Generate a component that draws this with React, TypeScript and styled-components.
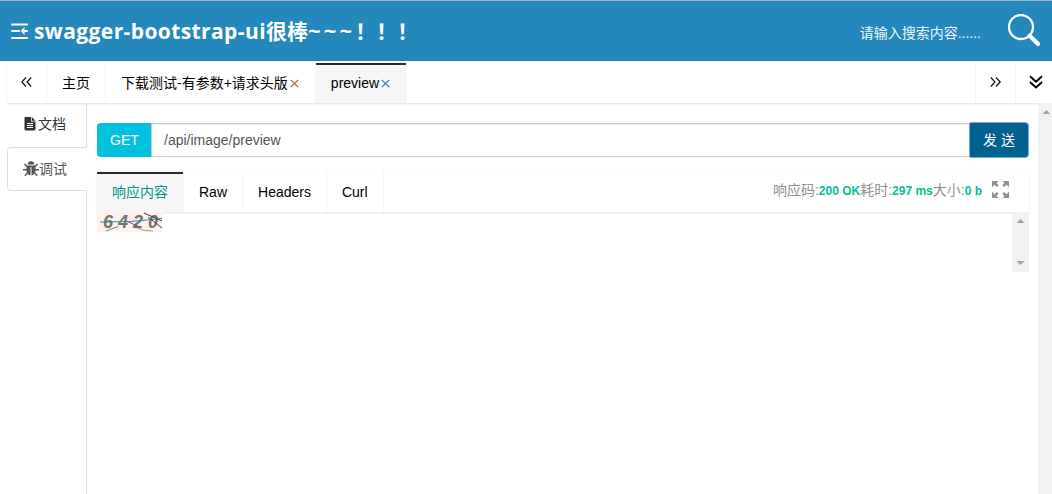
import React from "react";
import styled, { createGlobalStyle, css } from "styled-components";

const Global = createGlobalStyle`
  *, *::before, *::after { box-sizing: border-box; }
  html, body { margin: 0; height: 100%; overflow: hidden; }
  body {
    background: #fff;
    color: #000;
    font: 14px/20px "Liberation Sans", "Noto Sans CJK SC", sans-serif;
    white-space: nowrap;
  }
  svg { display: block; flex: none; }
`;

const Page = styled.div`
  display: flex;
  flex-direction: column;
  height: 494px;
  width: 1052px;
  overflow: hidden;
`;

const Header = styled.header`
  display: flex;
  align-items: center;
  height: 61px;
  flex: none;
  padding: 0 11px;
  border-top: 1px solid #a9b0b4;
  background: #2588bc;
  color: #fff;
`;

const Title = styled.h1`
  margin: 0 0 2px 6px;
  flex: 1;
  font: bold 21px/30px "Open Sans", "Noto Sans CJK SC", sans-serif;
`;

const Latin = styled.span`
  letter-spacing: 0.4px;
`;

const Tildes = styled.span`
  font-size: 22px;
  letter-spacing: 3.2px;
`;

const SearchHint = styled.span`
  margin: 3px 26px 0 0;
  color: #eef6fa;
  font-size: 14px;
`;

const TabBar = styled.nav<{ $inset?: boolean }>`
  display: flex;
  flex: none;
  height: ${(p) => (p.$inset ? 40 : 42)}px;
  padding-top: ${(p) => (p.$inset ? 0 : 2)}px;
  margin: ${(p) => (p.$inset ? "0" : "0 -3px 0 7px")};
  background: #fff;
  box-shadow: 0 1px 2px rgba(0, 0, 0, 0.12);
`;

const Tab = styled.div<{ $active?: boolean; $accent?: boolean }>`
  display: flex;
  align-items: center;
  padding: 0 15px;
  border-right: 1px solid #f4f4f4;
  color: ${(p) => (p.$accent ? "#009688" : "#000")};
  ${(p) =>
    p.$active &&
    css`
      background: #f6f6f6;
      box-shadow: inset 0 2px #292b34;
    `}
`;

const TabButton = styled.div<{ $left?: boolean }>`
  display: flex;
  flex: none;
  justify-content: center;
  align-items: center;
  width: 40px;
  padding-bottom: 3px;
  border: 0 solid #f4f4f4;
  border-width: ${(p) => (p.$left ? "0 0 0 1px" : "0 1px 0 0")};
`;

const CloseMark = styled.svg<{ $color: string }>`
  margin: 0 1px 0 2px;
  stroke: ${(p) => p.$color};
`;

const Spacer = styled.div`
  flex: 1;
`;

const Body = styled.div`
  display: flex;
  flex: 1;
  min-height: 0;
`;

const Sidebar = styled.aside`
  display: flex;
  flex-direction: column;
  width: 80px;
  margin-left: 7px;
  flex: none;
`;

const SideTab = styled.div<{ $active?: boolean }>`
  display: flex;
  align-items: center;
  height: 44px;
  padding: 0 0 2px 16px;
  border-right: 1px solid #ddd;
  color: #333;
  ${(p) =>
    p.$active &&
    css`
      padding: 0 0 0 15px;
      border: 1px solid #ddd;
      border-right-color: transparent;
      border-radius: 4px 0 0 4px;
      color: #555;
    `}
`;

const SideRule = styled.div`
  flex: 1;
  border-right: 1px solid #ddd;
`;

const Main = styled.main`
  display: flex;
  flex-direction: column;
  flex: 1;
  padding: 20px 9px 0 10px;
`;

const RequestRow = styled.div`
  display: flex;
  height: 34px;
  width: 932px;
  margin-bottom: 15px;
`;

const Method = styled.span`
  width: 54px;
  padding: 7px 0 0 13px;
  border-radius: 4px 0 0 4px;
  background: #00c1de;
  color: #fff;
`;

const UrlField = styled.div`
  flex: 1;
  padding: 6px 12px;
  border: 1px solid #ccc;
  border-right: 0;
  box-shadow: inset 0 1px 1px rgba(0, 0, 0, 0.075);
  color: #555;
`;

const SendButton = styled.button`
  width: 60px;
  margin: -1px 0;
  padding: 0;
  border: 1px solid #6aabee;
  border-radius: 2px 4px 4px 2px;
  background: #00618e;
  color: #fff;
  font: inherit;
`;

const Card = styled.section`
  width: 932px;
`;

const Stats = styled.div`
  display: flex;
  align-items: center;
  padding: 0 20px 4px 0;
  color: #919191;
`;

const Value = styled.b`
  color: #00bf9a;
  font-size: 12px;
  padding-top: 1px;
`;

const Result = styled.div`
  display: flex;
  justify-content: space-between;
  height: 60px;
`;

const InnerScroll = styled.div`
  display: flex;
  flex-direction: column;
  justify-content: space-between;
  align-items: center;
  width: 17px;
  height: 60px;
  padding: 7px 0;
  background: #f1f1f1;
`;

const PageScroll = styled.div`
  display: flex;
  justify-content: center;
  width: 14px;
  padding: 7px 0 0 3px;
  background: #f1f1f1;
`;

const Arrow = styled.i<{ $down?: boolean }>`
  width: 8px;
  height: 4px;
  background: #a3a3a3;
  clip-path: ${(p) =>
    p.$down ? "polygon(0 0, 100% 0, 50% 100%)" : "polygon(50% 0, 100% 100%, 0 100%)"};
`;

const FoldIcon = () => (
  <svg width="17" height="16" viewBox="0 0 17 16" fill="none" stroke="#fff" strokeWidth="2" strokeLinecap="round">
    <path d="M1 1.500h15M1 8h7M1 15h15M12 8h4" />
    <path d="M13.500 4 9.500 8l4 4z" fill="#fff" stroke="none" />
  </svg>
);

const SearchIcon = () => (
  <svg width="34" height="34" viewBox="0 0 34 34" fill="none" stroke="#fff">
    <circle cx="14" cy="13" r="12" strokeWidth="2.3" />
    <path d="m22.500 21.500 8.500 8.500" strokeWidth="4" strokeLinecap="round" />
  </svg>
);

const DoubleChevron = ({ dir }: { dir: "left" | "right" | "down" }) =>
  dir === "down" ? (
    <svg width="14" height="14" viewBox="0 0 14 14" fill="none" stroke="#000" strokeWidth="1.9">
      <path d="m1 1.200 6 5.400 6-5.400M1 7l6 5.400L13 7" />
    </svg>
  ) : (
    <svg width="11" height="10" viewBox="0 0 11 10" fill="none" stroke="#111" strokeWidth="1.2">
      <path d={dir === "left" ? "M5 .5.8 5 5 9.5M10.2.5 6 5l4.2 4.5" : "m.8.5 4.2 4.5-4.2 4.5M6 .5 10.2 5 6 9.5"} />
    </svg>
  );

const Close = ({ color }: { color: string }) => (
  <CloseMark $color={color} width="9" height="9" viewBox="0 0 9 9" strokeWidth="1.2">
    <path d="m.8.8 7.4 7.4m0-7.4L.8 8.2" />
  </CloseMark>
);

const DocIcon = () => (
  <svg width="15" height="15" viewBox="0 0 15 15">
    <path fill="#333" d="M2.500 0H8v4.500h4.500V12a1.500 1.500 0 0 1-1.500 1.500H3A1.500 1.500 0 0 1 1.500 12V1a1 1 0 0 1 1-1zM8.800 0l3.700 3.700H8.800z" />
    <path stroke="#fff" d="M4 6.500h6M4 8.500h6M4 10.500h6" />
  </svg>
);

const BugIcon = () => (
  <svg width="16" height="16" viewBox="0 0 16 16" fill="#555">
    <path d="M4.800 3.500a3.200 3.200 0 0 1 6.400 0z" />
    <path d="M3.500 4.500h9V9c0 3-1.500 5-4 5.500V6h-1v8.500c-2.500-.5-4-2.500-4-5.500z" />
    <path
      fill="none"
      stroke="#555"
      strokeWidth="1.400"
      d="M4 5.500 1.500 3M12 5.500 14.500 3M4 8.800H0M12 8.800h4M4.300 12l-2.500 2.800M11.700 12l2.500 2.800"
    />
  </svg>
);

const ExpandSvg = styled.svg`
  margin: 0 0 1px 10px;
`;

const ExpandIcon = () => (
  <ExpandSvg width="17" height="17" viewBox="0 0 17 17" fill="#919191">
    <path d="M0 0h6.500L4.500 2l2.200 2.200-1.800 1.800L2.400 3.800 0 6.500zM17 0v6.500l-2.400-2.700L12.100 6l-1.800-1.800L12.500 2l-2-2zM0 17v-6.500l2.400 2.700L4.900 11l1.800 1.800L4.500 15l2 2zM17 17h-6.500l2-2-2.200-2.200 1.800-1.800 2.500 2.200 2.400-2.700z" />
  </ExpandSvg>
);

const Digits = styled.g`
  font: italic bold 18px "Liberation Sans", sans-serif;
`;

const Captcha = () => (
  <svg width="65" height="20" viewBox="0 0 65 20">
    <rect width="65" height="20" fill="#fdf0ee" />
    <Digits fill="#77716e">
      <text x="6" y="16">6</text>
      <text x="21" y="16">4</text>
      <text x="36" y="16">2</text>
      <text x="51" y="16">0</text>
    </Digits>
    <g fill="none">
      <path stroke="#29949c" strokeWidth="1.200" d="m3 10 30-.5 32-3" />
      <path stroke="#39a878" d="m9 19 12-4.500" />
      <path stroke="#a33a86" d="m29 9 14 6" />
      <path stroke="#4d3857" d="m47 1 18 8M51 5l14 11" />
      <path stroke="#7bb45c" d="m40 16 8 2.500 8 .5" />
    </g>
  </svg>
);

export default function App() {
  return (
    <Page>
      <Global />
      <Header>
        <FoldIcon />
        <Title>
          <Latin>swagger-bootstrap-ui</Latin>很棒<Tildes>~~~</Tildes>！！！
        </Title>
        <SearchHint>请输入搜索内容......</SearchHint>
        <SearchIcon />
      </Header>
      <TabBar>
        <TabButton><DoubleChevron dir="left" /></TabButton>
        <Tab>主页</Tab>
        <Tab>下载测试-有参数+请求头版<Close color="#a8632f" /></Tab>
        <Tab $active>preview<Close color="#357ca8" /></Tab>
        <Spacer />
        <TabButton $left><DoubleChevron dir="right" /></TabButton>
        <TabButton $left><DoubleChevron dir="down" /></TabButton>
      </TabBar>
      <Body>
        <Sidebar>
          <SideTab><DocIcon />文档</SideTab>
          <SideTab $active><BugIcon />调试</SideTab>
          <SideRule />
        </Sidebar>
        <Main>
          <RequestRow>
            <Method>GET</Method>
            <UrlField>/api/image/preview</UrlField>
            <SendButton>发 送</SendButton>
          </RequestRow>
          <Card>
            <TabBar $inset>
              <Tab $active $accent>响应内容</Tab>
              <Tab>Raw</Tab>
              <Tab>Headers</Tab>
              <Tab>Curl</Tab>
              <Spacer />
              <Stats>
                响应码:<Value>200 OK</Value>耗时:<Value>297 ms</Value>大小:<Value>0 b</Value>
                <ExpandIcon />
              </Stats>
            </TabBar>
            <Result>
              <Captcha />
              <InnerScroll>
                <Arrow />
                <Arrow $down />
              </InnerScroll>
            </Result>
          </Card>
        </Main>
        <PageScroll><Arrow /></PageScroll>
      </Body>
    </Page>
  );
}
